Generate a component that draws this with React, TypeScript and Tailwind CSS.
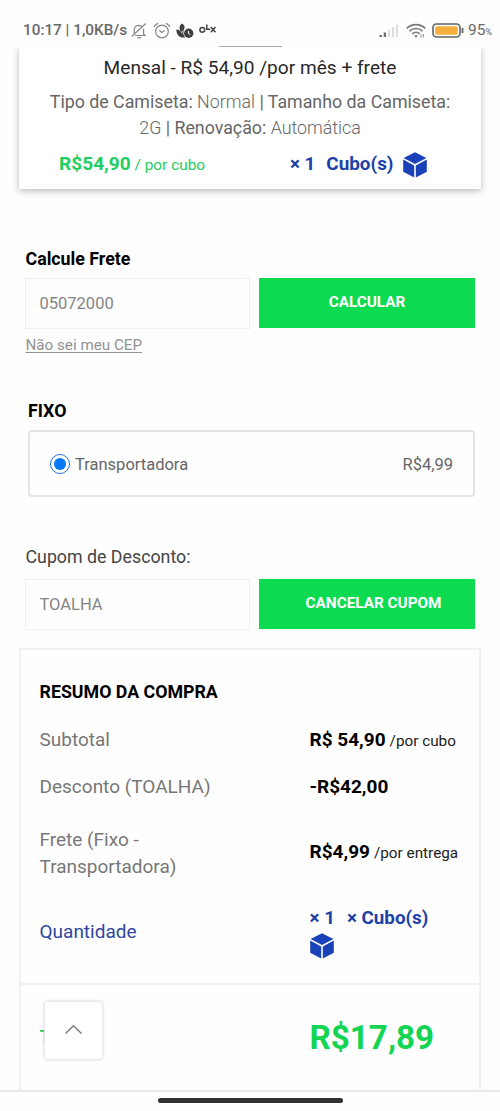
import React from "react";

function Cube({ className }: { className: string }) {
  return (
    <svg viewBox="0 0 24 26" className={className} fill="#1b41b8">
      <path d="M12 0.2 L23.4 6.1 L12 12 L0.6 6.1 Z" />
      <path d="M0.2 7.6 L11.2 13.4 V25.6 L0.2 19.8 Z" />
      <path d="M23.8 7.6 L12.8 13.4 V25.6 L23.8 19.8 Z" />
    </svg>
  );
}

function StatusBar() {
  return (
    <header className="relative h-[47px] shrink-0 text-[#686868]">
      <div className="flex h-[47px] items-center pt-[14px] pl-[23px]">
        <span className="w-[105px] shrink-0 whitespace-nowrap text-[15.300px] font-medium">10:17 | 1,0KB/s</span>
        <svg className="ml-[3px] h-4 w-4 shrink-0" viewBox="0 0 16 16" fill="none" stroke="#858585" strokeWidth="1.2" strokeLinecap="round" strokeLinejoin="round">
          <path d="M3.2 10.500V7.2C3.2 4.2 5 2.5 7.8 2.4 9.300 2.450 10.500 2.900 11.300 3.700M12.600 6V11.300M4.500 12.500H14.200L12.600 11M6.800 14.700H9.600M14.500 .8L1.200 13" />
        </svg>
        <svg className="ml-[6px] h-[18px] w-[18px] shrink-0" viewBox="0 0 18 18" fill="none" stroke="#858585" strokeWidth="1.2" strokeLinecap="round">
          <circle cx="9" cy="9.500" r="6.300" />
          <path d="M1.300 4.300L4.500 1.500M16.700 4.300L13.500 1.500M6.700 8.700L9 10.500L11.300 8.700" />
        </svg>
        <svg className="ml-[5px] h-4 w-[18px] shrink-0" viewBox="0 0 18 16" fill="#3f3f3f">
          <path d="M5.800 .5C8.500 2 9.500 4.500 7.500 7.300L5.800 9L4.100 7.300C2.800 5 3.600 2.500 5.800 .5Z" />
          <path d="M.3 6.500C3 6.600 5 8 5.800 10.500C6.600 8.600 7.600 7.600 9 7.200V14.500H6.500C2.700 14 .4 11 .3 6.500Z" />
          <circle cx="12.700" cy="10.200" r="5.400" fill="#fefefe" />
          <circle cx="12.700" cy="10.200" r="4.700" />
          <path d="M12.400 7.800V10.500L14.300 11.500" stroke="#fff" fill="none" />
        </svg>
        <svg className="-mt-[3px] ml-[5px] h-[10px] w-[18px] shrink-0" viewBox="0 0 18 10" fill="none" stroke="#454545" strokeWidth="1.500">
          <circle cx="3.300" cy="5.800" r="2.400" />
          <path d="M7.800 .5V5.300H11.300M11.800 3L16.500 8.300M16.500 3L11.800 8.300" />
        </svg>
        <svg className="ml-[162px] h-[15px] w-5 shrink-0" viewBox="0 0 20 15" fill="#6d6d6d">
          <path d="M.5 12H3V14H.5ZM4.700 9.500H7V14H4.700Z" />
          <path fill="#dedede" d="M9 6.500H11V14H9ZM13 4H15V14H13ZM17 1.500H19V14H17Z" />
        </svg>
        <svg className="ml-[7px] h-4 w-5 shrink-0" viewBox="0 0 20 16" fill="none" stroke="#777" strokeWidth="1.600">
          <path d="M.7 5.400C6 .3 14 .3 19.300 5.400M3.500 8.200C7.300 4.600 12.700 4.600 16.500 8.200M6.200 10.900C8.500 8.900 11.500 8.900 13.800 10.900" />
          <path d="M8 12.300H12L10 14.700Z" fill="#777" stroke="none" />
          <path d="M15 14.500V11.500M17.300 11V14.500" strokeWidth="1.100" stroke="#999" />
        </svg>
        <svg className="ml-[6px] h-[15px] w-8 shrink-0" viewBox="0 0 32 15">
          <rect x="1" y="1" width="27" height="13" rx="3.500" fill="#fff" stroke="#626262" strokeWidth="1.600" />
          <rect x="3.300" y="3.300" width="22.400" height="8.400" rx="1.500" fill="#f3ae3b" />
          <path d="M30.500 5V10" stroke="#626262" strokeWidth="1.800" />
        </svg>
        <span className="ml-1 text-[15.500px]">95<span className="text-[9px]">%</span></span>
      </div>
      <div className="absolute top-[46px] left-[219px] h-px w-[63px] bg-[#aaa]" />
    </header>
  );
}

function Field({ value }: { value: string }) {
  return (
    <div className="flex h-[51px] w-[225px] items-center border border-[#eaf1f0] pt-px pl-[13.500px] text-[16.500px] text-[#858585]">
      {value}
    </div>
  );
}

function Row({ label, children, className }: { label: React.ReactNode; children: React.ReactNode; className: string }) {
  return (
    <div className={"flex items-center whitespace-nowrap pl-[19.500px] text-[19px] text-[#777] " + className}>
      <div className="w-[270px] shrink-0">{label}</div>
      <div className="flex items-baseline text-black">{children}</div>
    </div>
  );
}

export default function App() {
  return (
    <div className="relative flex h-[1111px] w-[500px] flex-col overflow-hidden bg-[#fefefe] font-['Roboto','Liberation_Sans',sans-serif]">
      <StatusBar />
      <div className="h-[160px] shrink-0 overflow-hidden">
        <section className="mx-[19px] h-[142px] bg-white text-center whitespace-nowrap text-[#666] shadow-[0_2px_7px_rgba(0,0,0,0.28)]">
          <h1 className="flex h-[40px] items-center justify-center pt-[2px] text-[19.100px] text-[#292929]">Mensal - R$ 54,90 /por mês + frete</h1>
          <div className="pt-[2px] text-[17.800px] leading-[25.500px]">
            <p>Tipo de Camiseta: <span className="font-light">Normal</span> | Tamanho da Camiseta:</p>
            <p><span className="font-light">2G</span> | Renovação: <span className="font-light">Automática</span></p>
          </div>
          <div className="flex h-[49px] items-center pl-10">
            <div className="w-[231px] text-left text-[#1dce60]">
              <span className="text-[19.100px] font-bold">R$54,90</span>
              <span className="text-[15.400px]"> / por cubo</span>
            </div>
            <span className="text-[18.700px] font-bold text-[#1b41a8]">× 1</span>
            <span className="ml-[11px] text-[18.900px] font-bold text-[#1b41a8]">Cubo(s)</span>
            <Cube className="mt-px ml-[10px] h-[26px] w-6" />
          </div>
        </section>
      </div>

      <section className="px-[25px] pt-[40px]">
        <h2 className="flex h-[25px] items-center pl-[.5px] text-[17.800px] font-bold text-black">Calcule Frete</h2>
        <div className="mt-[6px] flex gap-[9px]">
          <Field value="05072000" />
          <button className="h-[50px] w-[216px] bg-[#0cdb51] pb-[2px] text-[15.300px] font-bold text-white">CALCULAR</button>
        </div>
        <a className="flex h-[32px] items-center pl-[.5px] text-[15.200px] text-[#929292] underline underline-offset-2">Não sei meu CEP</a>
      </section>

      <section className="pt-[37px] pr-[25px] pl-[28px]">
        <h2 className="flex h-[24px] items-center pt-[2px] text-[17.800px] font-bold text-black">FIXO</h2>
        <div className="mt-[8px] flex h-[67px] items-center rounded-[4px] border-2 border-[#e4e4e4] pr-5 pl-5 text-[16.500px] text-[#666]">
          <span className="flex h-5 w-5 items-center justify-center rounded-full border-[1.500px] border-[#2879d8]">
            <span className="h-3 w-3 rounded-full bg-[#0878f9]" />
          </span>
          <span className="ml-[5px] pt-[3px]">Transportadora</span>
          <span className="ml-auto pt-[3px]">R$4,99</span>
        </div>
      </section>

      <section className="px-[25px] pt-[47px]">
        <h2 className="flex h-[25px] items-center pt-[2px] pl-[.5px] text-[17.800px] text-[#444]">Cupom de Desconto:</h2>
        <div className="mt-[10px] flex gap-[9px]">
          <Field value="TOALHA" />
          <button className="h-[50px] w-[216px] bg-[#0cdb51] pb-[2px] pl-[13px] text-[15.300px] font-bold text-white">CANCELAR CUPOM</button>
        </div>
      </section>

      <section className="mx-[19px] mt-[18px] h-[442px] shrink-0 border-x-2 border-t-2 border-[#f1f1f1]">
        <h2 className="flex h-[67px] items-end pb-[11px] pl-[18.500px] text-[17.800px] font-bold text-black">RESUMO DA COMPRA</h2>
        <div className="-ml-px">
          <Row className="h-[47px]" label="Subtotal">
            <b>R$ 54,90</b><span className="ml-[4px] text-[15.300px] text-[#222]">/por cubo</span>
          </Row>
          <Row className="h-[46px]" label="Desconto (TOALHA)"><b>-R$42,00</b></Row>
          <Row className="h-[85px]" label={<p className="leading-[27px]">Frete (Fixo -<br />Transportadora)</p>}>
            <b>R$4,99</b><span className="ml-[4px] text-[15.300px] text-[#222]">/por entrega</span>
          </Row>
          <Row className="h-[90px] border-b-2 border-[#f1f1f1] pb-[15px]" label={<span className="relative top-px text-[#3046a0]">Quantidade</span>}>
            <div className="text-[18.800px] font-bold text-[#1b41a8]">
              <div className="flex h-[28px] items-center gap-[12px]"><span>× 1</span><span>× Cubo(s)</span></div>
              <Cube className="mt-px h-[26px] w-6" />
            </div>
          </Row>
          <div className="flex h-[104px] items-center pt-px pl-[19.500px] text-[33.200px] font-bold text-[#13d553]">
            <span className="w-[270px] shrink-0 text-[17.800px] font-medium">Total</span>
            <span>R$17,89</span>
          </div>
        </div>
      </section>

      <footer className="flex h-[21px] shrink-0 justify-center border-t-2 border-[#e8e8e8] pt-[6px]">
        <div className="h-[5px] w-[185px] rounded-full bg-[#303030]" />
      </footer>

      <button className="absolute top-[1001px] left-[44px] flex h-[59px] w-[59px] items-center justify-center rounded-[4px] border border-[#eaeaea] bg-white pb-[3px] shadow-[0_0_3px_rgba(0,0,0,0.15)]">
        <svg className="h-[9px] w-[17px]" viewBox="0 0 17 9" fill="none" stroke="#777" strokeWidth="1.400">
          <path d="M.5 8.500L8.500 .8L16.500 8.500" />
        </svg>
      </button>
    </div>
  );
}
